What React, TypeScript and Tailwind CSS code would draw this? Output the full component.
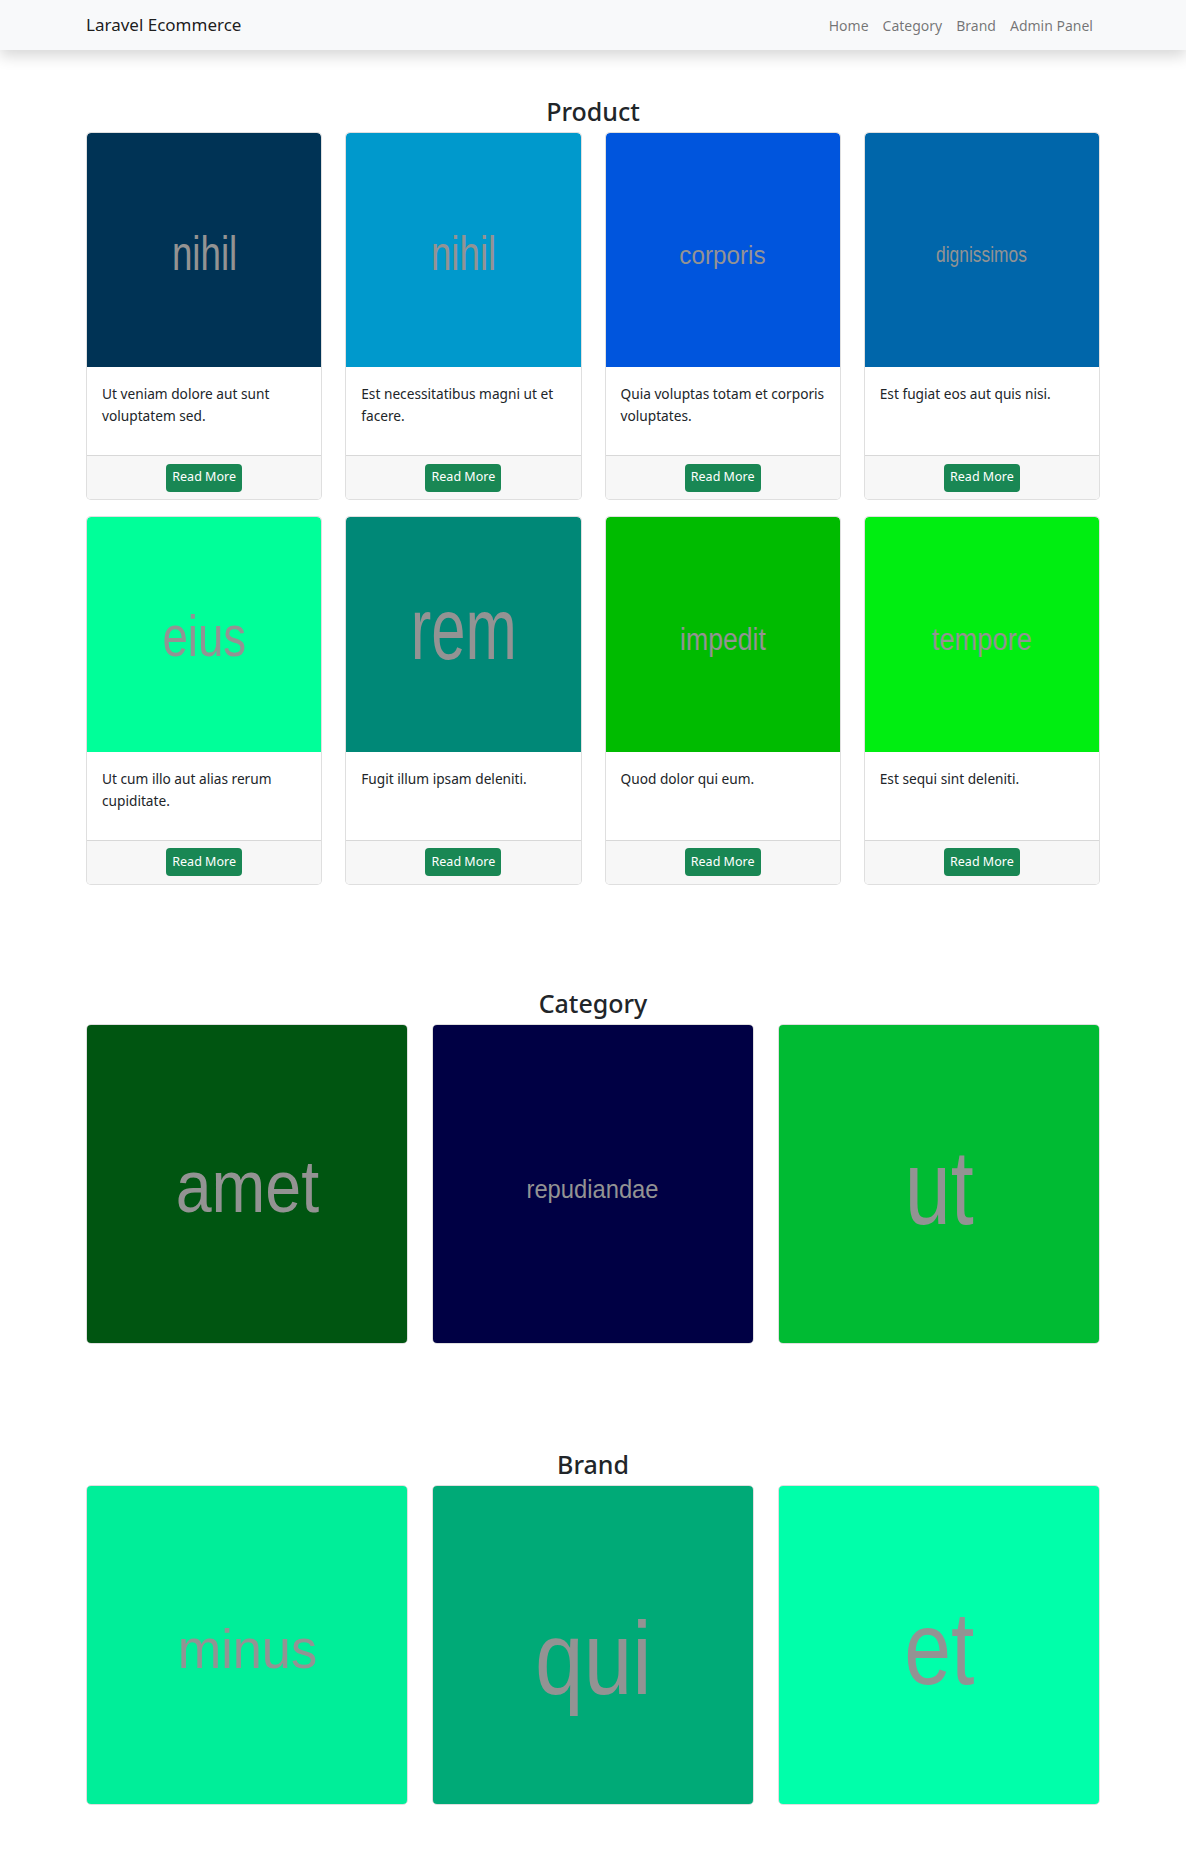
import React from "react";

type Tile = {
  word: string;
  bg: string;
  // full class strings for the placeholder word (size, squeeze, nudge)
  text: string;
};

type Product = Tile & { desc: string };

const products: Product[] = [
  { word: "nihil", bg: "bg-[#003355]", text: "text-[49px] scale-x-[0.75] translate-y-[3px]", desc: "Ut veniam dolore aut sunt voluptatem sed." },
  { word: "nihil", bg: "bg-[#0099cc]", text: "text-[49px] scale-x-[0.75] translate-y-[3px]", desc: "Est necessitatibus magni ut et facere." },
  { word: "corporis", bg: "bg-[#0055dd]", text: "text-[25px] scale-x-[0.97] translate-y-[5px]", desc: "Quia voluptas totam et corporis voluptates." },
  { word: "dignissimos", bg: "bg-[#0066aa]", text: "text-[22px] scale-x-[0.79] translate-y-[5px]", desc: "Est fugiat eos aut quis nisi." },
  { word: "eius", bg: "bg-[#00ff99]", text: "text-[57px] scale-x-[0.8] translate-y-[2px]", desc: "Ut cum illo aut alias rerum cupiditate." },
  { word: "rem", bg: "bg-[#008877]", text: "text-[88px] scale-x-[0.7] -translate-y-[5px]", desc: "Fugit illum ipsam deleniti." },
  { word: "impedit", bg: "bg-[#00bb00]", text: "text-[31px] scale-x-[0.86] translate-y-[5px]", desc: "Quod dolor qui eum." },
  { word: "tempore", bg: "bg-[#00ee11]", text: "text-[31px] scale-x-[0.88] translate-y-[5px]", desc: "Est sequi sint deleniti." },
];

const categories: Tile[] = [
  { word: "amet", bg: "bg-[#005511]", text: "text-[75px] scale-x-[0.86] translate-y-[3px]" },
  { word: "repudiandae", bg: "bg-[#000044]", text: "text-[25px] scale-x-[0.95] translate-y-[6px]" },
  { word: "ut", bg: "bg-[#00bb33]", text: "text-[106px] scale-x-[0.78] translate-y-[3px]" },
];

const brands: Tile[] = [
  { word: "minus", bg: "bg-[#00ee99]", text: "text-[55px] scale-x-[0.95] translate-y-[5px]" },
  { word: "qui", bg: "bg-[#00aa77]", text: "text-[104px] scale-x-[0.84] translate-y-[13px]" },
  { word: "et", bg: "bg-[#00ffaa]", text: "text-[104px] scale-x-[0.81] translate-y-[3px]" },
];

function Placeholder({ tile, className }: { tile: Tile; className: string }) {
  return (
    <div className={`${tile.bg} ${className} flex items-center justify-center overflow-hidden`}>
      <span
        className={`${tile.text} inline-block leading-none text-[#939393] font-['Liberation_Sans',Arial,sans-serif]`}
      >
        {tile.word}
      </span>
    </div>
  );
}

function SectionTitle({ children }: { children: React.ReactNode }) {
  return (
    <h2 className="text-center text-[25px] leading-[30px] font-medium text-[#212529] mb-[6px]">
      {children}
    </h2>
  );
}

function ProductCard({ product }: { product: Product }) {
  return (
    <div className="flex flex-col h-full border border-black/[.125] rounded-[5px] bg-white overflow-hidden">
      <Placeholder tile={product} className="aspect-square rounded-t-[4px]" />
      <div className="flex-1 pt-[16px] px-[15px] pb-[15px]">
        <p className="text-[13.7px] leading-[22px] text-[#212529] mb-[13px]">{product.desc}</p>
      </div>
      <div className="h-[44px] bg-[#f7f7f7] border-t border-black/[.125] flex items-center justify-center">
        <button className="w-[76px] h-[28px] rounded-[4px] bg-[#198754] text-white text-[12.5px]">
          Read More
        </button>
      </div>
    </div>
  );
}

function TileCard({ tile }: { tile: Tile }) {
  return (
    <div className="border border-black/[.125] rounded-[5px] overflow-hidden">
      <Placeholder tile={tile} className="h-[318px]" />
    </div>
  );
}

export default function App() {
  return (
    <div className="min-h-screen bg-white font-['Noto_Sans',sans-serif] text-[#212529]">
      {/* Top navigation */}
      <nav className="h-[50px] bg-[#f8f9fa] shadow-[0_6px_14px_rgba(0,0,0,0.16)] relative z-10">
        <div className="max-w-[1014px] mx-auto h-full flex items-center justify-between">
          <a className="text-[17px] text-black/90">Laravel Ecommerce</a>
          <div className="flex items-center text-[14px] text-black/55">
            <a className="px-[7px]">Home</a>
            <a className="px-[7px]">Category</a>
            <a className="px-[7px]">Brand</a>
            <a className="px-[7px]">Admin Panel</a>
          </div>
        </div>
      </nav>

      <main className="max-w-[1014px] mx-auto pb-[58px]">
        <section className="pt-[46px]">
          <SectionTitle>Product</SectionTitle>
          <div className="grid grid-cols-4 gap-x-[23px] gap-y-[16px]">
            {products.map((p, i) => (
              <ProductCard key={i} product={p} />
            ))}
          </div>
        </section>

        <section className="pt-[103px]">
          <SectionTitle>Category</SectionTitle>
          <div className="grid grid-cols-3 gap-[24px]">
            {categories.map((c, i) => (
              <TileCard key={i} tile={c} />
            ))}
          </div>
        </section>

        <section className="pt-[105px]">
          <SectionTitle>Brand</SectionTitle>
          <div className="grid grid-cols-3 gap-[24px]">
            {brands.map((b, i) => (
              <TileCard key={i} tile={b} />
            ))}
          </div>
        </section>
      </main>
    </div>
  );
}
